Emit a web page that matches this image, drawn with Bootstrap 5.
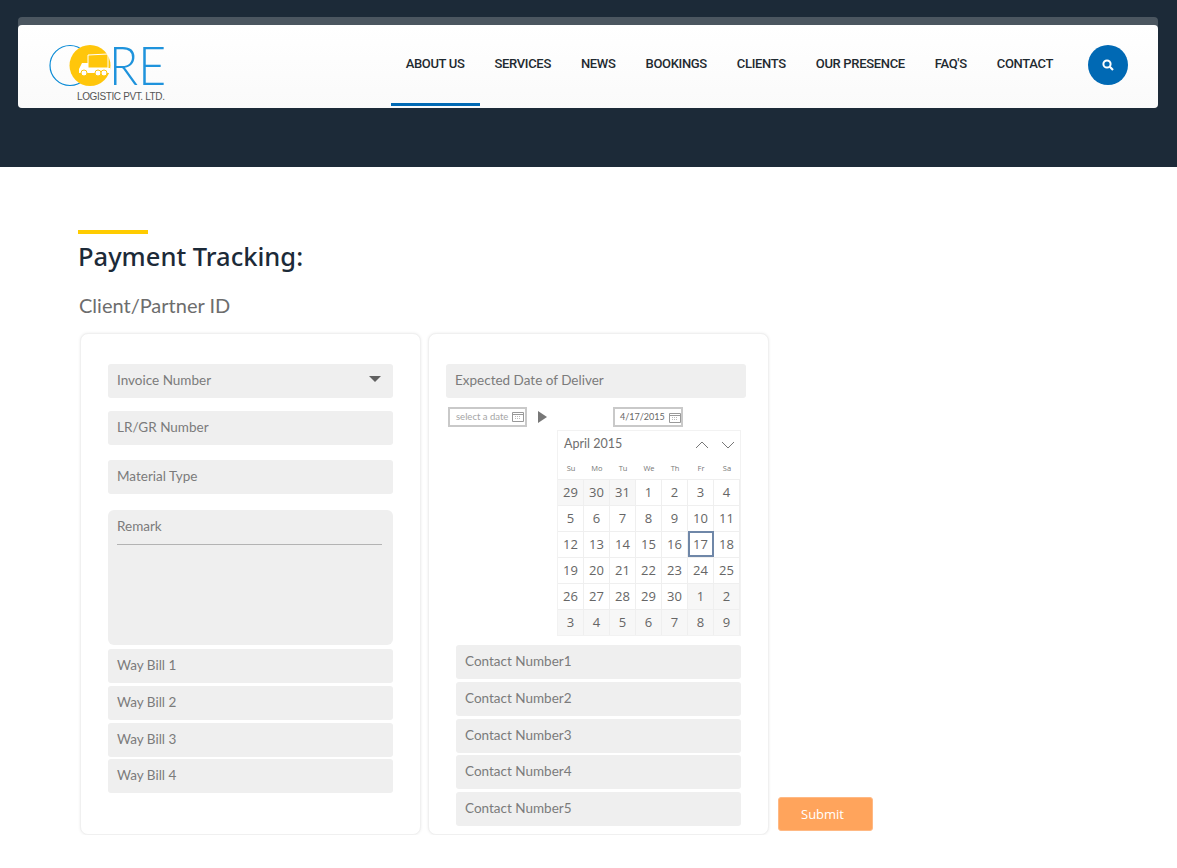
<!DOCTYPE html>
<html lang="en">
<head>
    <meta charset="utf-8">
    <meta name="viewport" content="width=device-width, initial-scale=1">
    <title>Payment Tracking</title>
    <link href="https://cdn.jsdelivr.net/npm/bootstrap@5.3.1/dist/css/bootstrap.min.css" rel="stylesheet">
    <style>
        body {
            background: #fff;
            font-family: Lato, sans-serif;
            color: #6f6f6f;
        }
        .top-band {
            background: #1c2a38;
            height: 167px;
            padding: 17px 19px 0 18px;
        }
        .nav-shell {
            background: #4b5660;
            border-radius: 4px;
            padding-top: 8px;
        }
        .nav-inner {
            background: linear-gradient(to bottom, #fff, #fafafa);
            border-radius: 4px;
            height: 83px;
            padding: 0 30px 0 31px;
        }
        .logo-box { width: 126px; height: 80px; }
        .menu-link {
            display: block;
            height: 81px;
            padding: 31px 15px 0 15px;
            font: 500 13px/16px Roboto, sans-serif;
            letter-spacing: -0.33px;
            color: #1f2a30;
            text-decoration: none;
            white-space: nowrap;
        }
        .menu-link.is-active { border-bottom: 3px solid #0069b4; }
        .search-btn {
            width: 40px;
            height: 40px;
            border-radius: 50%;
            background: #0069b4;
            margin: 20px 0 0 20px;
        }
        .page-body { padding: 63px 0 0 78px; }
        .title-rule { width: 70px; height: 4px; background: #fc0; }
        .page-title {
            font: 500 25.5px/36px "Noto Sans", sans-serif;
            color: #1c2a38;
            margin: 4px 0 0;
        }
        .client-label {
            font: 400 20px/28px Lato, sans-serif;
            color: #6d6d6d;
            margin: 17px 0 0 1px;
        }
        .panel-row { margin: 14px 0 0 2px; }
        .form-panel {
            width: 341px;
            height: 502px;
            background: #fff;
            border: 1px solid #f0f0f0;
            border-radius: 8px;
            box-shadow: 0 0 3px rgba(0, 0, 0, .08);
        }
        .panel-left { padding: 30px 27px 0 27px; }
        .panel-right { padding: 30px 22px 0 17px; margin-left: 7px; }
        .fake-field {
            background: #efefef;
            border-radius: 3px;
            height: 34px;
            padding: 0 9px;
            font-size: 13.5px;
            line-height: 32px;
            color: #7b7b7b;
        }
        .caret-down {
            width: 0;
            height: 0;
            border-left: 6px solid transparent;
            border-right: 6px solid transparent;
            border-top: 6px solid #606060;
            margin: 12px 3px 0 0;
        }
        .note-field { height: 135px; border-radius: 6px; }
        .note-label { height: 35px; margin-right: 2px; border-bottom: 1px solid #b3b3b3; }
        .gap-2px { margin-top: 2px; }
        .gap-3px { margin-top: 3px; }
        .gap-4px { margin-top: 4px; }
        .gap-13px { margin-top: 13px; }
        .gap-15px { margin-top: 15px; }
        .gap-16px { margin-top: 16px; }
        .date-row { height: 21px; margin: 8px 0 0 2px; }
        .date-box {
            border: 2px solid #c9c9c9;
            height: 20px;
            line-height: 16px;
            background: #fff;
            white-space: nowrap;
        }
        .date-from { width: 79px; padding-left: 6px; font-size: 9.5px; color: #a5a5a5; gap: 4px; }
        .date-to { width: 70px; padding-left: 5px; font-size: 9px; color: #666; margin: 1px 0 0 66px; gap: 4px; }
        .play-mark {
            width: 0;
            height: 0;
            border-left: 9px solid #777;
            border-top: 6px solid transparent;
            border-bottom: 6px solid transparent;
            margin-left: 11px;
        }
        .cal-wrap {
            width: 184px;
            margin: 3px 0 0 111px;
            border: 1px solid #f2f2f2;
        }
        .cal-head { height: 27px; padding: 0 5px 0 6px; font-size: 12.5px; color: #6e6e6e; }
        .cal-arrows { gap: 12px; }
        .week-head, .day-grid { display: grid; grid-template-columns: repeat(7, 26px); }
        .week-head { height: 21px; font: 7.5px/21px "Open Sans", sans-serif; text-align: center; color: #777; }
        .day-cell {
            height: 26px;
            font: 13px/25px "Open Sans", sans-serif;
            text-align: center;
            color: #666;
            border: 1px solid #efefef;
            border-width: 1px 1px 0 0;
        }
        .day-cell.is-out { background: #f7f7f7; }
        .day-cell.is-today { outline: 2px solid #6f87a8; outline-offset: -2px; }
        .contact-list { margin: 9px 0 0 10px; width: 285px; }
        .send-btn {
            width: 95px;
            height: 34px;
            margin: 0 0 4px 9px;
            padding: 0 0 0 22px;
            background: #ffa45c;
            border: 1px solid #ffb984;
            border-radius: 3px;
            color: #fff;
            font: 13px "Open Sans", sans-serif;
            text-align: left;
        }
        .send-btn:hover { background: #ffa45c; color: #fff; }
    </style>
</head>
<body>

    <div class="top-band">
        <div class="nav-shell">
            <nav class="nav-inner d-flex align-items-start">
                <a class="logo-box d-block" href="#">
                    <svg width="126" height="80" viewBox="0 -20 126 80">
                        <circle cx="21" cy="20.500" r="20" fill="none" stroke="#0b8bd6" stroke-width="1.200"/>
                        <circle cx="41" cy="20.500" r="20.500" fill="#ffc60b"/>
                        <path d="M39 10l20-1v14H39z" fill="none" stroke="#fff" stroke-width="1"/>
                        <path d="M30 24l3-6h6v5h22v5H30z" fill="#fff"/>
                        <circle cx="35" cy="28" r="3" fill="#fff" stroke="#ffc60b"/>
                        <circle cx="49" cy="28" r="3" fill="#fff" stroke="#ffc60b"/>
                        <circle cx="55" cy="28" r="3" fill="#fff" stroke="#ffc60b"/>
                        <text x="60" y="40" font-family="Lato, sans-serif" font-weight="300" font-size="53" textLength="57" lengthAdjust="spacingAndGlyphs" fill="#1f93dc">RE</text>
                        <text x="28" y="55" font-family="Liberation Sans, sans-serif" font-size="10" textLength="88" fill="#555">LOGISTIC PVT. LTD.</text>
                    </svg>
                </a>
                <div class="d-flex ms-auto align-items-start">
                    <a class="menu-link is-active" href="#">ABOUT US</a>
                    <a class="menu-link" href="#">SERVICES</a>
                    <a class="menu-link" href="#">NEWS</a>
                    <a class="menu-link" href="#">BOOKINGS</a>
                    <a class="menu-link" href="#">CLIENTS</a>
                    <a class="menu-link" href="#">OUR PRESENCE</a>
                    <a class="menu-link" href="#">FAQ'S</a>
                    <a class="menu-link" href="#">CONTACT</a>
                </div>
                <div class="search-btn d-flex align-items-center justify-content-center flex-shrink-0">
                    <svg width="12" height="12" viewBox="0 0 12 12"><circle cx="5" cy="5" r="3.600" fill="none" stroke="#fff" stroke-width="2"/><path d="M7.800 7.800L11 11" stroke="#fff" stroke-width="2.200"/></svg>
                </div>
            </nav>
        </div>
    </div>

    <div class="page-body">
        <div class="title-rule"></div>
        <h1 class="page-title">Payment Tracking:</h1>
        <p class="client-label">Client/Partner ID</p>

        <div class="panel-row d-flex align-items-end">
            <div class="form-panel panel-left">
                <div class="fake-field d-flex justify-content-between align-items-start">Invoice Number<span class="caret-down"></span></div>
                <div class="fake-field gap-13px">LR/GR Number</div>
                <div class="fake-field gap-15px">Material Type</div>
                <div class="fake-field note-field gap-16px"><div class="note-label">Remark</div></div>
                <div class="fake-field gap-4px">Way Bill 1</div>
                <div class="fake-field gap-3px">Way Bill 2</div>
                <div class="fake-field gap-3px">Way Bill 3</div>
                <div class="fake-field gap-2px">Way Bill 4</div>
            </div>

            <div class="form-panel panel-right">
                <div class="fake-field">Expected Date of Deliver</div>
                <div class="date-row d-flex align-items-center">
                    <div class="date-box date-from d-flex align-items-center">select a date
                        <svg class="flex-shrink-0" width="12" height="11" viewBox="0 0 12 11"><use href="#cal-icon"/></svg>
                    </div>
                    <span class="play-mark"></span>
                    <div class="date-box date-to d-flex align-items-center">4/17/2015
                        <svg class="flex-shrink-0" width="12" height="11" viewBox="0 0 12 11"><use href="#cal-icon"/></svg>
                    </div>
                </div>
                <div class="cal-wrap" id="calendar"></div>
                <div class="contact-list">
                    <div class="fake-field">Contact Number1</div>
                    <div class="fake-field gap-3px">Contact Number2</div>
                    <div class="fake-field gap-3px">Contact Number3</div>
                    <div class="fake-field gap-2px">Contact Number4</div>
                    <div class="fake-field gap-3px">Contact Number5</div>
                </div>
            </div>

            <button class="btn send-btn" type="button">Submit</button>
        </div>
    </div>

    <svg width="0" height="0" class="d-block">
        <symbol id="cal-icon" viewBox="0 0 12 11">
            <path d="M.5 1.500h11v9H.5zM.5 3.500h11" fill="none" stroke="#999"/>
            <path d="M3 5.500h6M3 7.500h6" stroke="#bbb" stroke-dasharray="1 1"/>
        </symbol>
    </svg>

    <script>
        // April 2015 calendar, six rows starting from Mar 29
        const weekNames = ["Su", "Mo", "Tu", "We", "Th", "Fr", "Sa"];
        const days = [29, 30, 31];
        for (let d = 1; d <= 30; d++) days.push(d);
        for (let d = 1; d <= 9; d++) days.push(d);

        let html = `<div class="cal-head d-flex justify-content-between align-items-center"><span>April 2015</span>
            <span class="d-flex cal-arrows">
                <svg width="14" height="8" viewBox="0 0 14 8"><path d="M1 7l6-6 6 6" fill="none" stroke="#777"/></svg>
                <svg width="14" height="8" viewBox="0 0 14 8"><path d="M1 1l6 6 6-6" fill="none" stroke="#777"/></svg>
            </span></div>`;
        html += `<div class="week-head">${weekNames.map(w => `<span>${w}</span>`).join("")}</div>`;
        html += `<div class="day-grid">`;
        days.forEach((d, i) => {
            const out = i < 3 || i >= 33;
            const today = i === 19;
            html += `<div class="day-cell${out ? " is-out" : ""}${today ? " is-today" : ""}">${d}</div>`;
        });
        html += `</div>`;
        document.getElementById("calendar").innerHTML = html;
    </script>

    <script src="https://cdn.jsdelivr.net/npm/bootstrap@5.3.1/dist/js/bootstrap.bundle.min.js"></script>
</body>
</html>
